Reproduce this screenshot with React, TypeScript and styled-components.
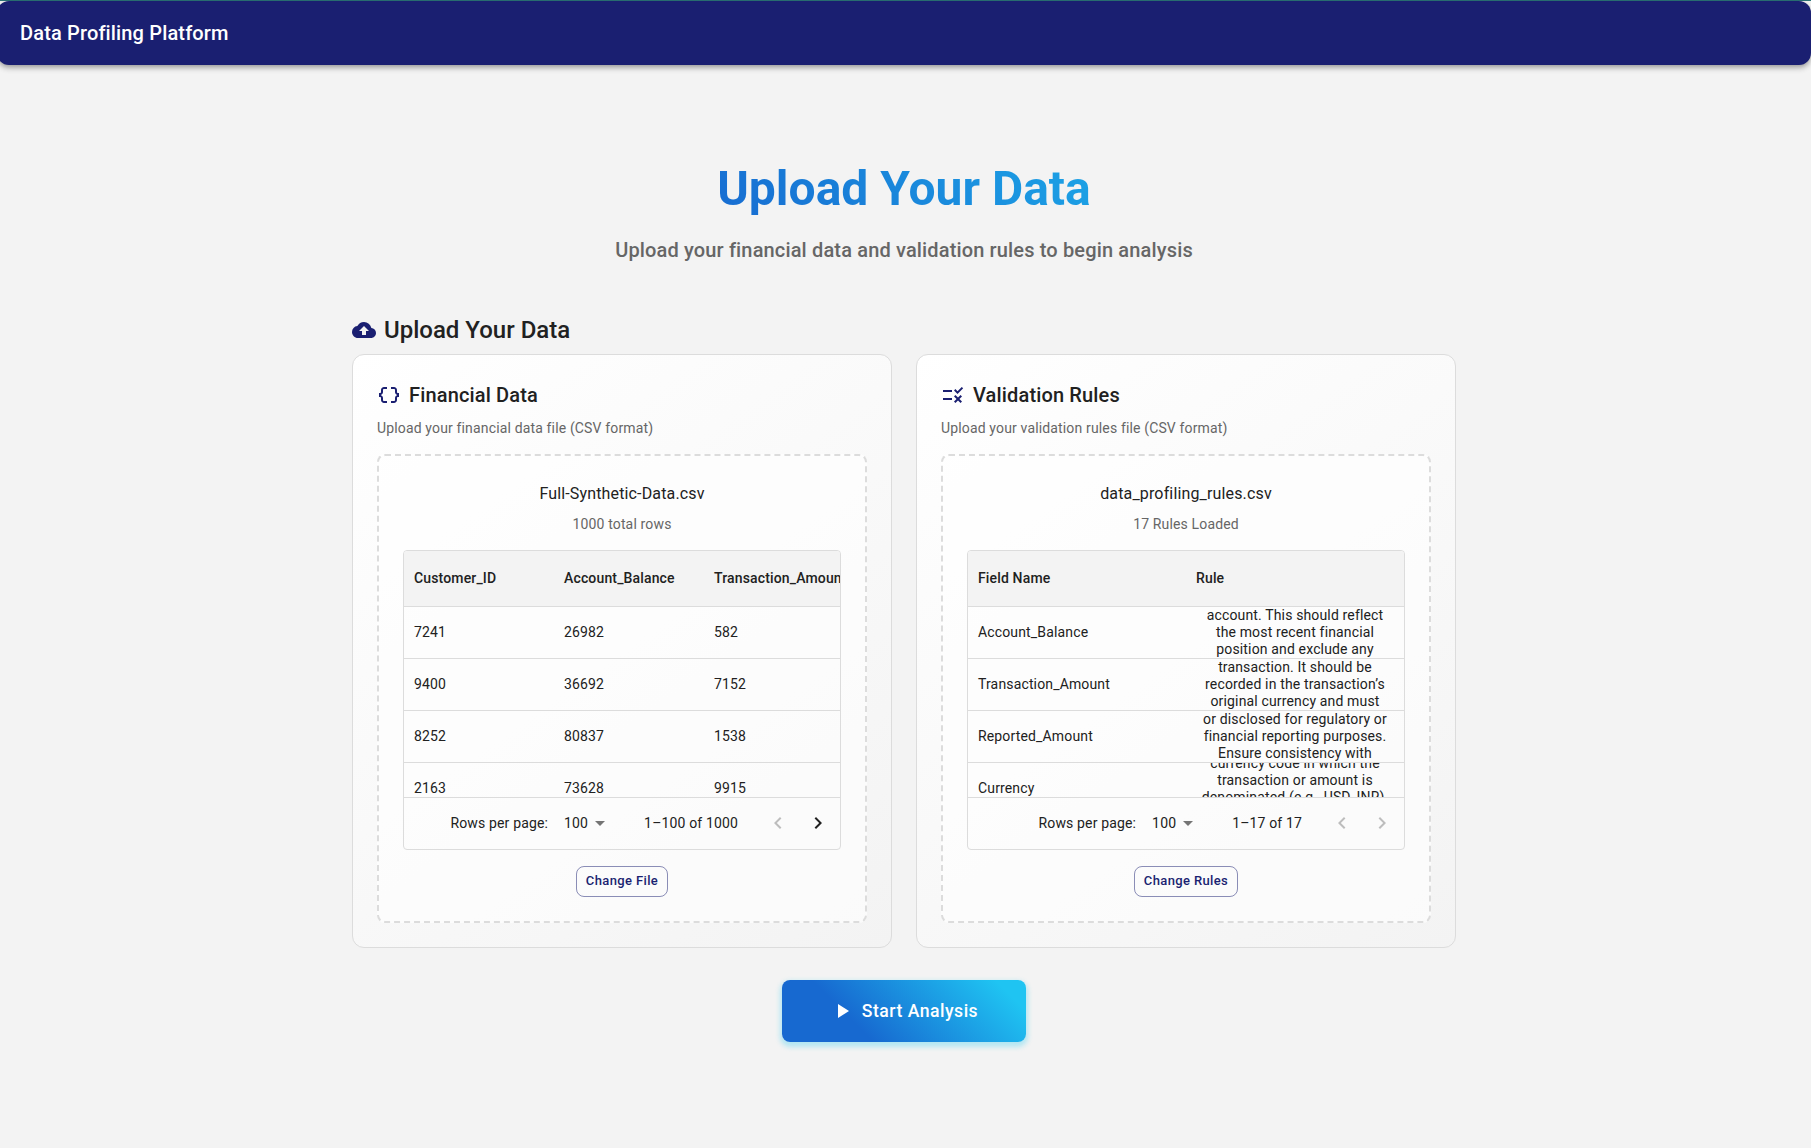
import React from "react";
import styled, { createGlobalStyle } from "styled-components";
import {
  MdArrowDropDown,
  MdCloudUpload,
  MdDataObject,
  MdKeyboardArrowLeft,
  MdKeyboardArrowRight,
  MdPlayArrow,
  MdRule,
} from "react-icons/md";

const GlobalStyle = createGlobalStyle`
  *, *::before, *::after { box-sizing: border-box; }
  html { overflow: hidden; }
  body {
    margin: 0;
    overflow: hidden;
    background: #f3f3f3;
    color: #212121;
    font-family: Roboto, "Liberation Sans", sans-serif;
    -webkit-font-smoothing: antialiased;
  }
`;

const Page = styled.div`
  width: 1814px;
  height: 1148px;
  margin-left: -3px;
  border-top: 1px solid #2c7377;
`;

const AppBar = styled.header`
  height: 64px;
  display: flex;
  align-items: center;
  padding: 0 23px;
  border-radius: 12px;
  background: #1a1f71;
  box-shadow: 0 2px 4px -1px rgba(0, 0, 0, 0.2), 0 4px 5px rgba(0, 0, 0, 0.14),
    0 1px 10px rgba(0, 0, 0, 0.12);
`;

const BrandName = styled.div`
  color: #fff;
  font-size: 20px;
  font-weight: 500;
  line-height: 32px;
  letter-spacing: 0.15px;
`;

const Main = styled.main`
  width: 1104px;
  margin: 0 auto;
  padding-top: 96px;
  display: flex;
  flex-direction: column;
`;

const PageTitle = styled.h1`
  margin: 0;
  text-align: center;
  font-size: 48px;
  font-weight: 700;
  line-height: 56px;
  background: linear-gradient(45deg, #1769d0 30%, #1fc4f2 90%);
  -webkit-background-clip: text;
  background-clip: text;
  color: transparent;
`;

const PageLead = styled.p`
  margin: 17px 0 0;
  text-align: center;
  color: #666;
  font-size: 20px;
  font-weight: 500;
  line-height: 32px;
  letter-spacing: 0.15px;
`;

const SectionTitle = styled.h2`
  margin: 48px 0 8px;
  display: flex;
  align-items: center;
  gap: 8px;
  font-size: 24px;
  font-weight: 500;
  line-height: 32px;

  svg {
    color: #1a1f71;
  }
`;

const Cards = styled.div`
  display: grid;
  grid-template-columns: repeat(2, minmax(0, 1fr));
  gap: 24px;
`;

const Card = styled.section`
  height: 594px;
  padding: 24px;
  display: flex;
  flex-direction: column;
  border: 1px solid #dcdcdc;
  border-radius: 12px;
  background: linear-gradient(145deg, #ffffff 0%, #f3f3f3 100%);
`;

const CardTitle = styled.h3`
  margin: 0;
  display: flex;
  align-items: center;
  gap: 8px;
  font-size: 20px;
  font-weight: 500;
  line-height: 32px;
  letter-spacing: 0.15px;

  svg {
    color: #1a1f71;
  }
`;

const CardHint = styled.p`
  margin: 7px 0 16px;
  color: #666;
  font-size: 14px;
  line-height: 20px;
  letter-spacing: 0.15px;
`;

const DropZone = styled.div`
  flex: 1;
  padding: 24px;
  display: flex;
  flex-direction: column;
  align-items: center;
  border: 2px dashed #dcdcdc;
  border-radius: 8px;
  background: rgba(255, 255, 255, 0.6);
`;

const FileName = styled.div`
  padding-top: 2px;
  font-size: 16px;
  line-height: 24px;
  letter-spacing: 0.15px;
`;

const FileMeta = styled.div`
  margin: 8px 0 16px;
  color: #666;
  font-size: 14px;
  line-height: 20px;
  letter-spacing: 0.15px;
`;

const Grid = styled.div`
  width: 100%;
  height: 300px;
  display: flex;
  flex-direction: column;
  overflow: hidden;
  border: 1px solid #dcdcdc;
  border-radius: 4px;
  font-size: 14px;
  letter-spacing: 0.15px;
`;

const GridHead = styled.div<{ $columns: string }>`
  flex: none;
  height: 56px;
  padding-bottom: 1px;
  display: grid;
  grid-template-columns: ${(p) => p.$columns};
  align-items: center;
  border-bottom: 1px solid #dcdcdc;
  background: #f3f3f3;
  font-weight: 500;
  white-space: nowrap;
`;

const GridBody = styled.div`
  flex: 1;
  min-height: 0;
  overflow: hidden;
`;

const GridRow = styled.div<{ $columns: string }>`
  height: 52px;
  display: grid;
  grid-template-columns: ${(p) => p.$columns};
  border-bottom: 1px solid #dcdcdc;
`;

const Cell = styled.div`
  padding: 0 10px 1px;
  display: flex;
  align-items: center;
  overflow: hidden;
`;

const HeadCell = styled.div`
  padding: 0 10px;
`;

const RuleCell = styled.div<{ $shift: number }>`
  display: flex;
  align-items: center;
  justify-content: center;
  overflow: hidden;
  padding-bottom: ${(p) => p.$shift}px;
  text-align: center;
  line-height: 17px;
  white-space: pre;
`;

const GridFooter = styled.div`
  flex: none;
  height: 52px;
  padding: 0 2px 1px 0;
  display: flex;
  align-items: center;
  justify-content: flex-end;
  border-top: 1px solid #dcdcdc;
`;

const PageSize = styled.div`
  margin: 0 32px 0 16px;
  display: flex;
  align-items: center;

  svg {
    color: #757575;
  }
`;

const Pager = styled.div`
  margin-left: 20px;
  display: flex;
`;

const PagerButton = styled.button`
  width: 40px;
  height: 40px;
  padding: 8px;
  border: 0;
  background: none;
  color: #212121;

  svg {
    display: block;
  }

  &:disabled {
    color: #bdbdbd;
  }
`;

const OutlineButton = styled.button`
  margin-top: 16px;
  height: 31px;
  padding: 0 9px 2px;
  border: 1px solid rgba(26, 31, 113, 0.5);
  border-radius: 8px;
  background: none;
  color: #1a1f71;
  font: 500 13px/22px Roboto, "Liberation Sans", sans-serif;
  letter-spacing: 0.37px;
`;

const StartButton = styled.button`
  align-self: center;
  margin-top: 32px;
  height: 62px;
  padding: 0 48px;
  display: flex;
  align-items: center;
  gap: 8px;
  border: 0;
  border-radius: 8px;
  background: linear-gradient(45deg, #1769d0 30%, #1fc4f2 90%);
  box-shadow: 0 3px 5px 2px rgba(33, 203, 243, 0.3);
  color: #fff;
  font: 500 17.6px/30px Roboto, "Liberation Sans", sans-serif;
  letter-spacing: 0.5px;
`;

const dataColumns = "150px 150px 150px";
const dataHeaders = ["Customer_ID", "Account_Balance", "Transaction_Amount"];
const dataRows = [
  ["7241", "26982", "582"],
  ["9400", "36692", "7152"],
  ["8252", "80837", "1538"],
  ["2163", "73628", "9915"],
];

const ruleColumns = "1fr 1fr";
const rules = [
  {
    field: "Account_Balance",
    lines: ["account. This should reflect", "the most recent financial", "position and exclude any"],
    shift: 0,
  },
  {
    field: "Transaction_Amount",
    lines: ["transaction. It should be", "recorded in the transaction’s", "original currency and must"],
    shift: 0,
  },
  {
    field: "Reported_Amount",
    lines: ["or disclosed for regulatory or", "financial reporting purposes.", "Ensure consistency with"],
    shift: 0,
  },
  {
    field: "Currency",
    lines: ["currency code in which the", "transaction or amount is", "denominated (e.g., USD, INR)."],
    shift: 17,
  },
];

function Footer({ range, hasNext }: { range: string; hasNext: boolean }) {
  return (
    <GridFooter>
      <span>Rows per page:</span>
      <PageSize>
        <span>100</span>
        <MdArrowDropDown size={24} />
      </PageSize>
      <span>{range}</span>
      <Pager>
        <PagerButton disabled aria-label="Previous page">
          <MdKeyboardArrowLeft size={24} />
        </PagerButton>
        <PagerButton disabled={!hasNext} aria-label="Next page">
          <MdKeyboardArrowRight size={24} />
        </PagerButton>
      </Pager>
    </GridFooter>
  );
}

export default function App() {
  return (
    <>
      <GlobalStyle />
      <Page>
        <AppBar>
          <BrandName>Data Profiling Platform</BrandName>
        </AppBar>
        <Main>
          <PageTitle>Upload Your Data</PageTitle>
          <PageLead>Upload your financial data and validation rules to begin analysis</PageLead>
          <SectionTitle>
            <MdCloudUpload size={24} />
            Upload Your Data
          </SectionTitle>
          <Cards>
            <Card>
              <CardTitle>
                <MdDataObject size={24} />
                Financial Data
              </CardTitle>
              <CardHint>Upload your financial data file (CSV format)</CardHint>
              <DropZone>
                <FileName>Full-Synthetic-Data.csv</FileName>
                <FileMeta>1000 total rows</FileMeta>
                <Grid>
                  <GridHead $columns={dataColumns}>
                    {dataHeaders.map((h) => (
                      <HeadCell key={h}>{h}</HeadCell>
                    ))}
                  </GridHead>
                  <GridBody>
                    {dataRows.map((row) => (
                      <GridRow key={row[0]} $columns={dataColumns}>
                        {row.map((v) => (
                          <Cell key={v}>{v}</Cell>
                        ))}
                      </GridRow>
                    ))}
                  </GridBody>
                  <Footer range="1–100 of 1000" hasNext />
                </Grid>
                <OutlineButton>Change File</OutlineButton>
              </DropZone>
            </Card>
            <Card>
              <CardTitle>
                <MdRule size={24} />
                Validation Rules
              </CardTitle>
              <CardHint>Upload your validation rules file (CSV format)</CardHint>
              <DropZone>
                <FileName>data_profiling_rules.csv</FileName>
                <FileMeta>17 Rules Loaded</FileMeta>
                <Grid>
                  <GridHead $columns={ruleColumns}>
                    <HeadCell>Field Name</HeadCell>
                    <HeadCell>Rule</HeadCell>
                  </GridHead>
                  <GridBody>
                    {rules.map((r) => (
                      <GridRow key={r.field} $columns={ruleColumns}>
                        <Cell>{r.field}</Cell>
                        <RuleCell $shift={r.shift}>{r.lines.join("\n")}</RuleCell>
                      </GridRow>
                    ))}
                  </GridBody>
                  <Footer range="1–17 of 17" hasNext={false} />
                </Grid>
                <OutlineButton>Change Rules</OutlineButton>
              </DropZone>
            </Card>
          </Cards>
          <StartButton>
            <MdPlayArrow size={24} />
            Start Analysis
          </StartButton>
        </Main>
      </Page>
    </>
  );
}
